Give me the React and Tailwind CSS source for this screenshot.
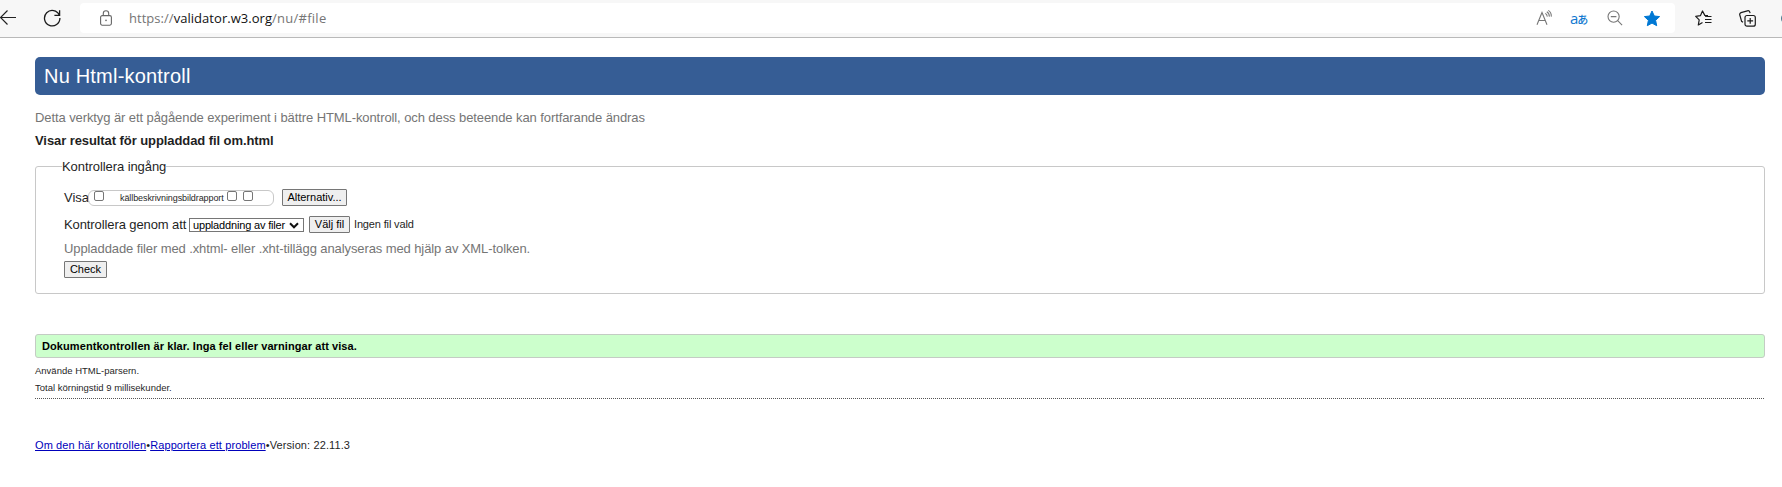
import React from "react";

function Toolbar() {
  return (
    <header className="flex h-[38px] items-start overflow-hidden border-b border-[#b9b9b9] bg-[#f7f7f7]">
      <div className="flex h-[36px] w-20 shrink-0 items-center">
        <svg className="h-[18px] w-[17px] shrink-0" viewBox="0 0 17 18" fill="none" stroke="#222" strokeWidth="1.2">
          <path d="M16 8.5H.7M7.5 1.5L.5 8.5l7 7" />
        </svg>
        <svg className="ml-[26px] h-[18px] w-[18px] shrink-0" viewBox="0 0 18 18" fill="none" stroke="#1b1b1b" strokeWidth="1.3">
          <path d="M16.3 6.2A7.7 7.7 0 1 0 16.9 9M16.6 1.2v5.2h-5.2" />
        </svg>
      </div>
      <div className="mt-[3px] flex h-[30px] w-[1595px] shrink-0 items-center rounded bg-white">
        <svg className="ml-5 h-[16px] w-[12px] shrink-0" viewBox="0 0 12 16" fill="none" stroke="#666" strokeWidth="1.1">
          <rect x=".6" y="5.6" width="10.8" height="9.6" rx="1.6" />
          <path d="M3.3 5.5V3.4a2.7 2.7 0 0 1 5.4 0v2.1" />
          <circle cx="6" cy="10.4" r=".8" fill="#666" stroke="none" />
        </svg>
        <span className="ml-[17px] whitespace-nowrap font-['Open_Sans',sans-serif] text-[13px] leading-[18px] tracking-[0.04px] text-[#757575]">
          https://<span className="text-[#111]">validator.w3.org</span><span className="tracking-[0.25px]">/nu/#file</span>
        </span>
        <div className="ml-auto flex items-center pr-[14px]">
          <svg className="h-[18px] w-[17px]" viewBox="0 0 17 18" fill="none" stroke="#777" strokeWidth="1.1">
            <path d="M1 15.8L6 3.5l5 12.3M2.8 11.5h6.4M9.3 4.4q2 1.200 1.900 3.200M10.800 2.800q2.700 1.700 2.500 4.800M12.300 1.400q3.200 2 3 6.200" />
          </svg>
          <span className="ml-[17px] flex w-[19px] items-baseline whitespace-nowrap leading-[18px] text-[#0f78d0]">
            <span className="font-['Open_Sans',sans-serif] text-[15px]">a</span>
            <span className="-ml-px font-['Noto_Sans_CJK_JP',sans-serif] text-[11px] font-medium">あ</span>
          </span>
          <svg className="ml-[18px] h-[16px] w-[16px]" viewBox="0 0 16 16" fill="none" stroke="#777" strokeWidth="1.1">
            <circle cx="6.6" cy="6.6" r="5.6" />
            <path d="M10.7 10.7l4.4 4.4M3.8 6.6h5.6" />
          </svg>
          <svg className="ml-[20px] h-[17px] w-[18px]" viewBox="0 0 18 17" fill="#0078d4" stroke="#0078d4" strokeWidth="1" strokeLinejoin="round">
            <path d="M9 1l2.3 5 5.3.6-4 3.7 1.1 5.4L9 13.1l-4.7 2.6 1.1-5.4-4-3.7L6.700 6z" />
          </svg>
        </div>
      </div>
      <div className="flex h-[36px] items-center pl-[20px]">
        <svg className="h-[17px] w-[17px] shrink-0" viewBox="0 0 17 17" fill="none" stroke="#1b1b1b" strokeWidth="1.2" strokeLinejoin="round">
          <path d="M13 5.600l-3.200-.2L7.500 1 5.500 5.600l-4.800.7 3.500 3.500-.9 5.200L7.500 12.500M10 6.500h6.500M10 9.500h6.500M10 12.500h6.500" />
        </svg>
        <svg className="ml-[27px] h-[17px] w-[17px] shrink-0" viewBox="0 0 17 17" fill="none" stroke="#1b1b1b" strokeWidth="1.2">
          <rect x="6" y="5.500" width="10.300" height="10.700" rx="2" />
          <path d="M11.200 8v5.800M8.300 10.900h5.800M4 12.200L2.600 11.300.8 5A2 2 0 0 1 2 2.600L8.400.8a2 2 0 0 1 2.400 1.400l.3 1" />
        </svg>
        <span className="ml-[25px] h-[11px] w-[12px] shrink-0 rounded-full bg-[#4e7d91]" />
      </div>
    </header>
  );
}

function PushButton({ className, children }) {
  return (
    <button className={"flex shrink-0 items-center justify-center whitespace-nowrap rounded-[1px] border border-[#767676] bg-[#efefef] text-[11px] leading-none text-black " + className}>
      {children}
    </button>
  );
}

function Box({ className }) {
  return <span className={"h-[10px] w-[10px] shrink-0 rounded-[2px] border border-[#767676] bg-white " + className} />;
}

export default function App() {
  return (
    <div className="h-[487px] w-[1782px] overflow-hidden bg-white font-['Liberation_Sans',Arial,sans-serif] text-[#1f1f1f]">
      <Toolbar />
      <main className="ml-[35px] w-[1730px] whitespace-nowrap pt-[19px]">
        <h1 className="flex h-[38px] items-center rounded-[5px] bg-[#365d95] pl-[9px] text-[20px] tracking-[0.2px] text-white">
          <span>Nu Html-kontroll</span>
        </h1>
        <p className="mt-[11px] h-[23px] text-[13px] leading-[23px] tracking-[-0.09px] text-[#757575]">
          Detta verktyg är ett pågående experiment i bättre HTML-kontroll, och dess beteende kan fortfarande ändras
        </p>
        <h2 className="h-[23px] text-[13px] font-bold leading-[23px] tracking-[-0.08px]">Visar resultat för uppladdad fil om.html</h2>
        <fieldset className="mt-[7px] h-[135px] rounded-[3px] border border-[#c8c8c8] pl-[28px]">
          <legend className="-ml-[2px] h-[15px] text-[13px] leading-[15px] tracking-[-0.07px]">Kontrollera ingång</legend>
          <div className="mt-[14px] flex h-[19px] items-center">
            <span className="w-[24px] text-[13px]">Visa</span>
            <div className="mt-px flex h-[16px] w-[186px] items-start rounded-[6px] border border-[#c8c8c8] pl-[5px]">
              <Box className="" />
              <span className="ml-[16px] mt-px w-[107px] text-[9px] leading-[13px] tracking-[-0.09px]">källbeskrivningsbildrapport</span>
              <Box className="" />
              <Box className="ml-[6px]" />
            </div>
            <PushButton className="ml-[8px] h-[17px] w-[65px]">Alternativ...</PushButton>
          </div>
          <div className="mt-[7px] flex h-[21px] items-center">
            <span className="w-[125px] text-[13px] tracking-[-0.1px]">Kontrollera genom att</span>
            <div className="mt-px flex h-[14px] w-[115px] items-center justify-between border border-[#767676] bg-white pl-[3px] pr-[4px] text-[11px] leading-none tracking-[-0.17px] text-black">
              <span>uppladdning av filer</span>
              <svg className="h-[7px] w-[10px]" viewBox="0 0 10 7" fill="none" stroke="#111" strokeWidth="2">
                <path d="M1 1.300l4 4 4-4" />
              </svg>
            </div>
            <PushButton className="ml-[5px] h-[17px] w-[41px]">Välj fil</PushButton>
            <span className="ml-[4px] text-[11px] tracking-[-0.15px]">Ingen fil vald</span>
          </div>
          <p className="mt-[3px] h-[21px] text-[13px] leading-[21px] tracking-[-0.095px] text-[#757575]">
            Uppladdade filer med .xhtml- eller .xht-tillägg analyseras med hjälp av XML-tolken.
          </p>
          <PushButton className="mt-[2px] h-[17px] w-[43px]">Check</PushButton>
        </fieldset>
        <p className="mt-[40px] h-[24px] rounded-[3px] border border-[#c4ccc4] bg-[#ccffcc] pl-[6px] text-[11px] font-bold leading-[22px] tracking-[0.08px] text-black">
          Dokumentkontrollen är klar. Inga fel eller varningar att visa.
        </p>
        <p className="mt-[4px] h-[17px] text-[9.5px] leading-[17px]">Använde HTML-parsern.</p>
        <p className="h-[17px] text-[9.5px] leading-[17px]">Total körningstid 9 millisekunder.</p>
        <div className="mt-[2px] h-px bg-[repeating-linear-gradient(90deg,#555_0px,#555_1px,transparent_1px,transparent_2px)]" />
        <footer className="mt-[38px] flex h-[16px] items-center text-[11px] tracking-[0.11px]">
          <a className="text-[#0000bb] underline">Om den här kontrollen</a>•
          <a className="text-[#0000bb] underline">Rapportera ett problem</a>•
          <span>Version: 22.11.3</span>
        </footer>
      </main>
    </div>
  );
}
